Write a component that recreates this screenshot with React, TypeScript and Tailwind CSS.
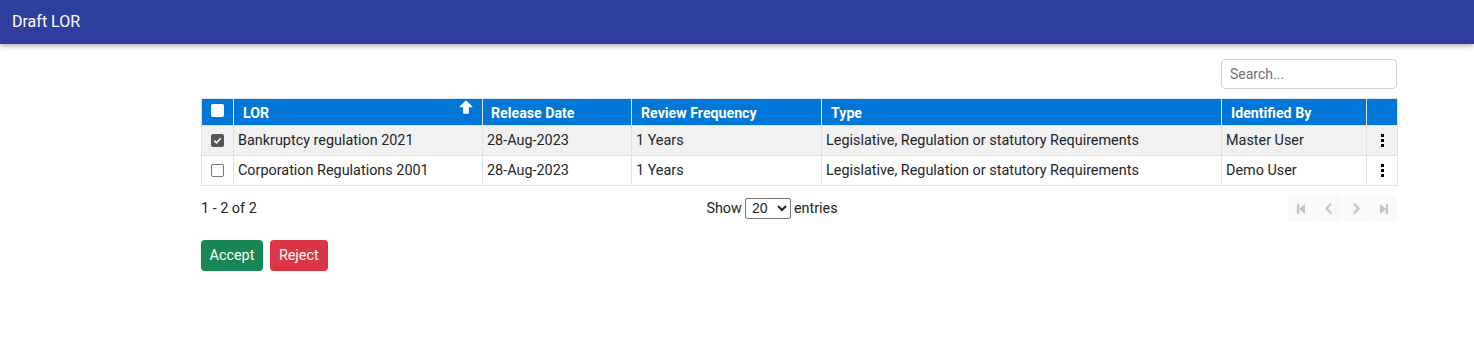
import { ChevronLeft, ChevronRight } from 'lucide-react';

const rows = [
  { lor: 'Bankruptcy regulation 2021', date: '28-Aug-2023', freq: '1 Years', type: 'Legislative, Regulation or statutory Requirements', by: 'Master User', checked: true },
  { lor: 'Corporation Regulations 2001', date: '28-Aug-2023', freq: '1 Years', type: 'Legislative, Regulation or statutory Requirements', by: 'Demo User', checked: false },
];

const Check = ({ checked }: { checked: boolean }) =>
  checked ? (
    <span className="inline-flex h-[13px] w-[13px] items-center justify-center rounded-[2px] bg-[#555] align-middle">
      <svg width="9" height="9" viewBox="0 0 10 10" fill="none" stroke="white" strokeWidth="1.8">
        <path d="M1.5 5.2 L4 7.5 L8.5 2.5" />
      </svg>
    </span>
  ) : (
    <span className="inline-block h-[13px] w-[13px] rounded-[2px] border border-[#767676] bg-white align-middle" />
  );

const Kebab = () => (
  <span className="inline-flex flex-col items-center gap-[2px] align-middle">
    <span className="h-[3px] w-[3px] bg-black" />
    <span className="h-[3px] w-[3px] bg-black" />
    <span className="h-[3px] w-[3px] bg-black" />
  </span>
);

export default function App() {
  return (
    <div className="min-h-[357px] bg-white font-['Roboto',sans-serif] text-[14.4px] text-[#212529]">
      <header className="flex h-[44px] items-center bg-[#2f3d9e] px-3 text-[16px] text-white shadow-[0_2px_5px_rgba(0,0,0,0.3)]">
        Draft LOR
      </header>

      <div className="ml-[201px] mr-[77px] pt-[15px]">
        <div className="mb-[9px] flex justify-end">
          <input
            placeholder="Search..."
            className="h-[30px] w-[176px] rounded-[4px] border border-[#ced4da] px-2 text-[14px] placeholder:text-[#6c757d]"
          />
        </div>

        <table className="w-full table-fixed border-collapse border border-[#dee2e6]">
          <colgroup>
            <col className="w-[32px]" />
            <col className="w-[249px]" />
            <col className="w-[149px]" />
            <col className="w-[190px]" />
            <col className="w-[400px]" />
            <col className="w-[145px]" />
            <col className="w-[31px]" />
          </colgroup>
          <thead>
            <tr className="h-[27px] bg-[#0076d6] text-left text-[14.2px] font-bold text-white">
              <th className="border-r border-[#dee2e6] text-center">
                <span className="inline-block h-[13px] w-[13px] translate-y-[1px] rounded-[2px] bg-white" />
              </th>
              <th className="border-r border-[#dee2e6] pl-[9px]">
                <div className="flex items-center justify-between pr-[9px]">
                  <span className="pt-[3px]">LOR</span>
                  {/* sort indicator */}
                  <svg width="14" height="14" viewBox="0 0 14 14" fill="white" stroke="white" strokeWidth="1" strokeLinejoin="round" className="-translate-y-[5px]">
                    <path d="M7 0.8 L13.2 6.8 L9.3 6.8 L9.3 13.2 L4.7 13.2 L4.7 6.8 L0.8 6.8 Z" />
                  </svg>
                </div>
              </th>
              <th className="border-r border-[#dee2e6] pl-[8px] pt-[3px]">Release Date</th>
              <th className="border-r border-[#dee2e6] pl-[9px] pt-[3px]">Review Frequency</th>
              <th className="border-r border-[#dee2e6] pl-[9px] pt-[3px]">Type</th>
              <th className="border-r border-[#dee2e6] pl-[9px] pt-[3px]">Identified By</th>
              <th />
            </tr>
          </thead>
          <tbody>
            {rows.map((r, i) => (
              <tr key={i} className={`h-[30px] border-t border-[#dee2e6] ${i === 0 ? 'bg-[#f1f1f1]' : 'bg-white'}`}>
                <td className="border-r border-[#dee2e6] text-center leading-none">
                  <Check checked={r.checked} />
                </td>
                <td className="border-r border-[#dee2e6] pl-[4px]">{r.lor}</td>
                <td className="border-r border-[#dee2e6] pl-[4px]">{r.date}</td>
                <td className="border-r border-[#dee2e6] pl-[4px]">{r.freq}</td>
                <td className="border-r border-[#dee2e6] pl-[4px]">{r.type}</td>
                <td className="border-r border-[#dee2e6] pl-[4px]">{r.by}</td>
                <td className="text-center leading-none">
                  <Kebab />
                </td>
              </tr>
            ))}
          </tbody>
        </table>

        <div className="mt-[9px] flex h-[27px] items-center justify-between">
          <span className="w-[200px]">1 - 2 of 2</span>
          <div className="flex items-center gap-[3px]">
            <span>Show</span>
            <select defaultValue="20" className="h-[21px] w-[46px] rounded-[2px] border border-[#767676] px-[2px] font-['Liberation_Sans',sans-serif] text-[14px]">
              <option>10</option>
              <option>20</option>
              <option>50</option>
            </select>
            <span>entries</span>
          </div>
          <div className="flex w-[254px] justify-end gap-[1px]">
            <span className="flex h-[27px] w-[26px] items-center justify-center rounded-[3px] bg-[#f8f9fa]">
              <svg width="10" height="12" viewBox="0 0 10 11" fill="#c4c4c4">
                <rect x="1" y="0.5" width="2.2" height="10" />
                <path d="M3 5.5 L9 0.5 V10.5 Z" />
              </svg>
            </span>
            <span className="flex h-[27px] w-[27px] items-center justify-center rounded-[3px] bg-[#f8f9fa] text-[#c4c4c4]">
              <ChevronLeft size={17} strokeWidth={3.2} />
            </span>
            <span className="flex h-[27px] w-[27px] items-center justify-center rounded-[3px] bg-[#f8f9fa] text-[#c4c4c4]">
              <ChevronRight size={17} strokeWidth={3.2} />
            </span>
            <span className="flex h-[27px] w-[26px] items-center justify-center rounded-[3px] bg-[#f8f9fa]">
              <svg width="10" height="12" viewBox="0 0 10 11" fill="#c4c4c4">
                <path d="M1 0.5 L7 5.5 L1 10.5 Z" />
                <rect x="6.8" y="0.5" width="2.2" height="10" />
              </svg>
            </span>
          </div>
        </div>

        <div className="mt-[18px] flex gap-[7px]">
          <button className="h-[31px] rounded-[4px] bg-[#198754] px-[8.5px] text-white">Accept</button>
          <button className="h-[31px] rounded-[4px] bg-[#dc3545] px-[9px] text-white">Reject</button>
        </div>
      </div>
    </div>
  );
}
